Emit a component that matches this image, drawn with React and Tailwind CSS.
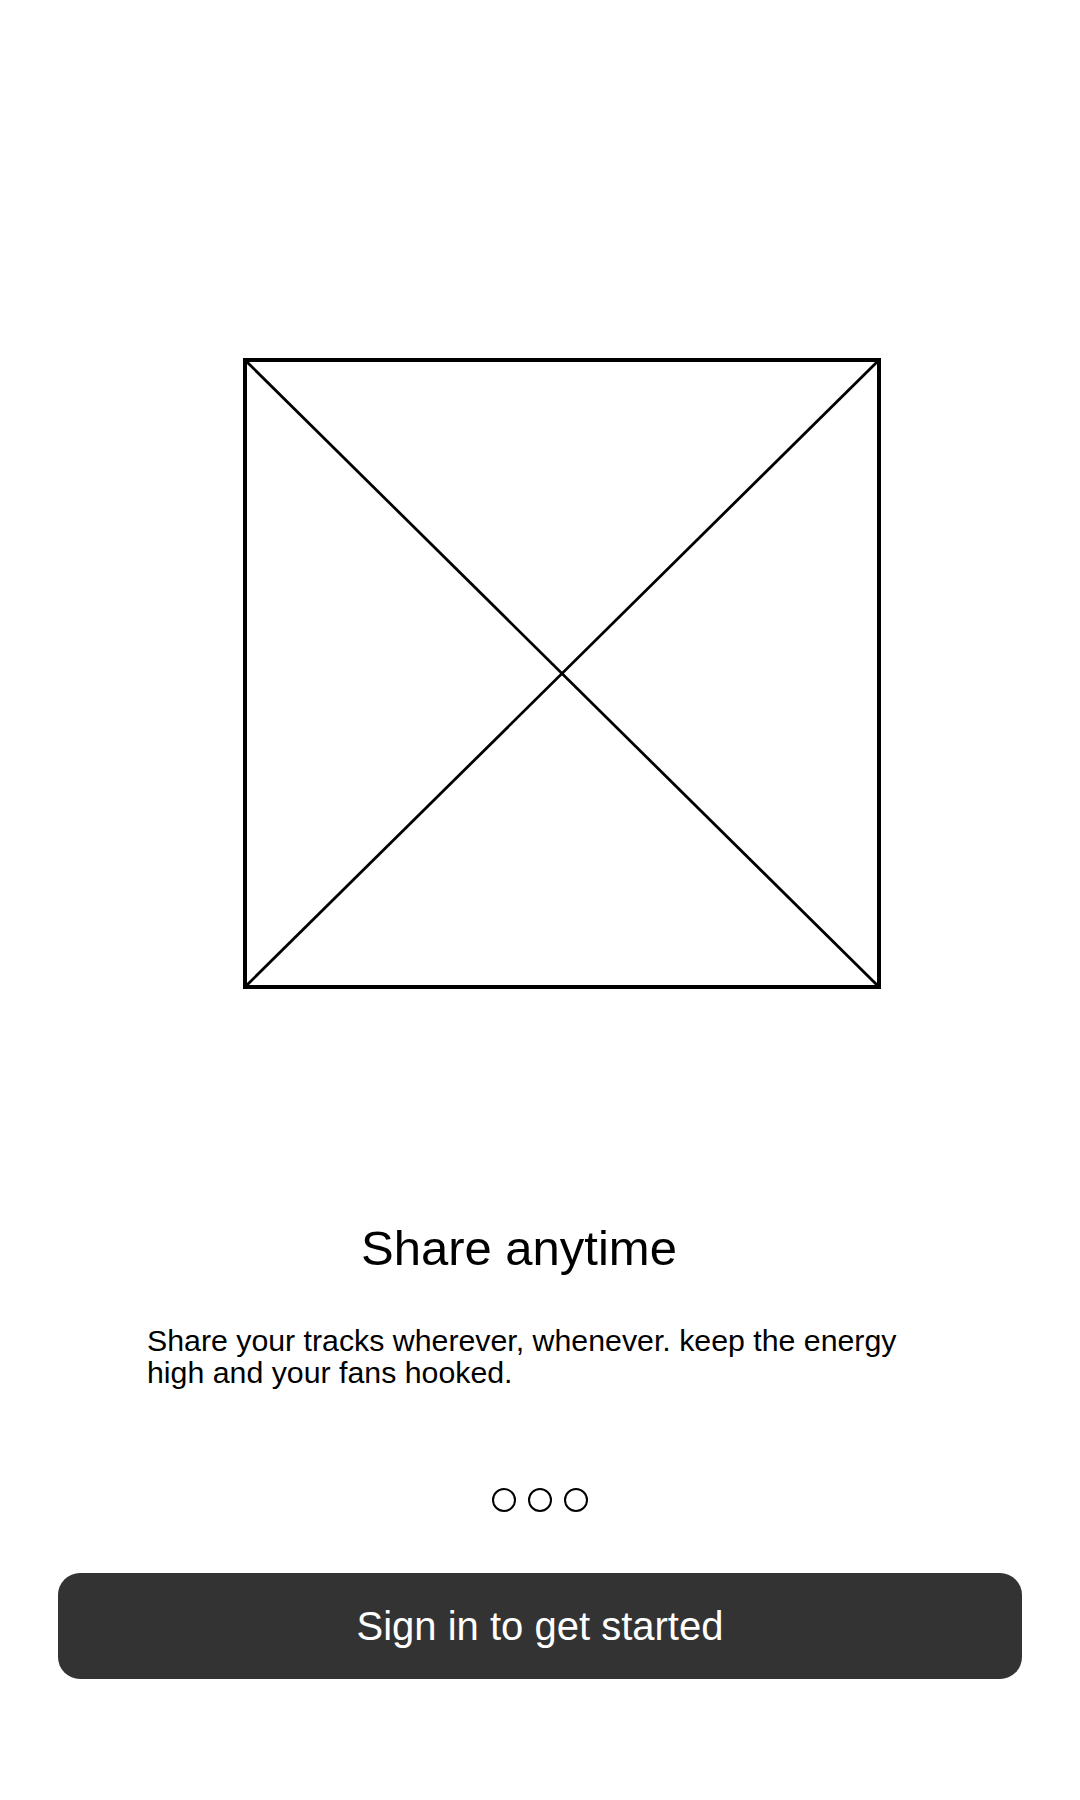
import React from "react";

const slides = [
  {
    title: "Share anytime",
    body: "Share your tracks wherever, whenever. keep the energy high and your fans hooked.",
  },
];

const Placeholder = () => (
  <div className="relative ml-[243px] w-[638px] h-[631px] border-4 border-black">
    <svg
      className="absolute inset-0 w-full h-full"
      viewBox="0 0 100 100"
      preserveAspectRatio="none"
    >
      <line x1="0" y1="0" x2="100" y2="100" stroke="#000" strokeWidth="2.8" vectorEffect="non-scaling-stroke" />
      <line x1="100" y1="0" x2="0" y2="100" stroke="#000" strokeWidth="2.8" vectorEffect="non-scaling-stroke" />
    </svg>
  </div>
);

const Dots = ({ count = 3 }) => (
  <div className="flex justify-center gap-[12px] mt-[99px]">
    {Array.from({ length: count }).map((_, i) => (
      <span key={i} className="w-[24px] h-[24px] rounded-full border-[2.5px] border-black" />
    ))}
  </div>
);

export default function App() {
  const slide = slides[0];
  return (
    <div className="min-h-[1800px] bg-white pt-[358px] font-['Liberation_Sans',Arial,sans-serif] text-black">
      <Placeholder />
      <h1 className="mt-[231px] ml-[361px] text-[49px] leading-[56px] font-normal">{slide.title}</h1>
      <p className="mt-[49px] ml-[147px] w-[775px] text-[30.3px] leading-[32px]">{slide.body}</p>
      <Dots />
      <div className="mt-[61px] px-[58px]">
        <button
          type="button"
          className="w-full h-[106px] rounded-[22px] bg-[#333333] text-white text-[40px] flex items-center justify-center"
        >
          Sign in to get started
        </button>
      </div>
    </div>
  );
}
